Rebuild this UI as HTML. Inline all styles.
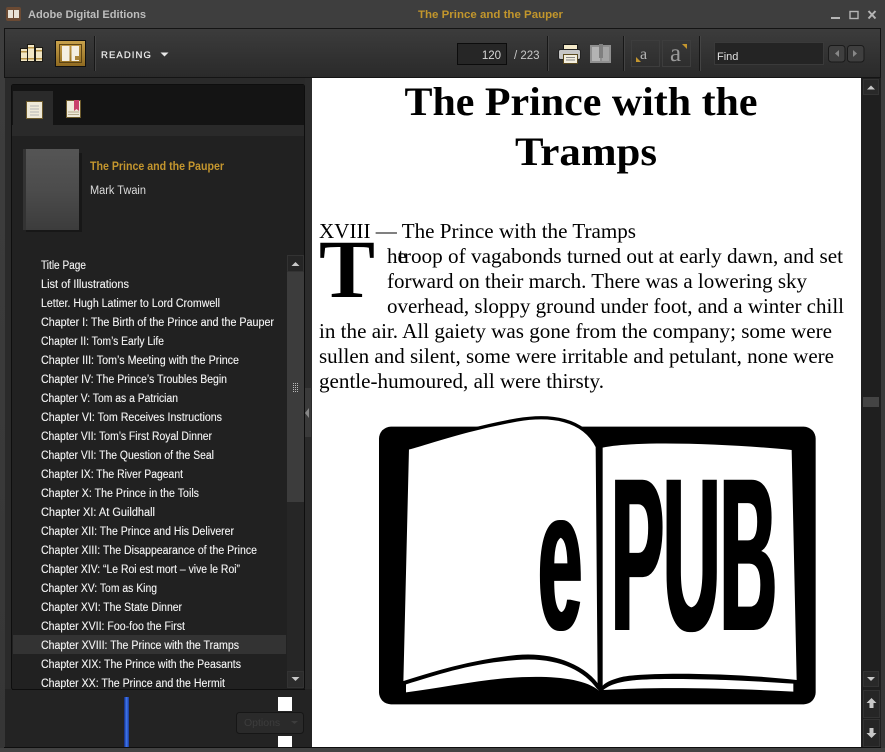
<!DOCTYPE html>
<html><head><meta charset="utf-8"><title>The Prince and the Pauper</title>
<style>
html,body{margin:0;padding:0;background:#3a3a3a;width:885px;height:752px;overflow:hidden}
svg{display:block}
.s{font-family:"Liberation Sans",sans-serif}
.toc text{font-family:"Liberation Sans",sans-serif;font-size:11.5px;fill:#f4f4f4;stroke:#f4f4f4;stroke-width:.12px}
.b text{font-family:"Liberation Serif",serif;font-size:21px;fill:#000}
</style></head><body>
<svg width="885" height="752" viewBox="0 0 885 752" xmlns="http://www.w3.org/2000/svg">
<defs>
<linearGradient id="top" x1="0" y1="0" x2="0" y2="1"><stop offset="0" stop-color="#3e3e3e"/><stop offset="1" stop-color="#363636"/></linearGradient>
<linearGradient id="tb" x1="0" y1="0" x2="0" y2="1"><stop offset="0" stop-color="#3c3c3c"/><stop offset="1" stop-color="#2a2a2a"/></linearGradient>
<linearGradient id="gold" x1="0" y1="0" x2="0" y2="1"><stop offset="0" stop-color="#c9a24c"/><stop offset="1" stop-color="#8f6a20"/></linearGradient>
<linearGradient id="cov" x1="0" y1="0" x2="0" y2="1"><stop offset="0" stop-color="#555"/><stop offset=".5" stop-color="#4c4c4c"/><stop offset="1" stop-color="#3c3c3c"/></linearGradient>
<linearGradient id="blue" x1="0" y1="0" x2="1" y2="0"><stop offset="0" stop-color="#12287a"/><stop offset=".5" stop-color="#3f78f0"/><stop offset="1" stop-color="#1a3a9a"/></linearGradient>
<filter id="fat" x="-20%" y="-20%" width="140%" height="140%" primitiveUnits="userSpaceOnUse"><feMorphology operator="dilate" radius="11 0"/></filter>
</defs>
<rect width="885" height="752" fill="url(#top)"/>

<!-- title bar -->
<rect x="6" y="7" width="15" height="14" rx="2" fill="#6b4a33"/>
<rect x="8" y="10" width="5" height="8" fill="#e9e2d6"/><rect x="14" y="10" width="5" height="8" fill="#e9e2d6"/>
<text class="s" x="28" y="18" font-size="11" font-weight="bold" fill="#bdbdbd" textLength="118" lengthAdjust="spacingAndGlyphs">Adobe Digital Editions</text>
<text class="s" x="418" y="18" font-size="11" font-weight="bold" fill="#c2962c" textLength="145" lengthAdjust="spacingAndGlyphs">The Prince and the Pauper</text>
<rect x="831" y="17" width="9" height="2" fill="#b5b5b5"/>
<rect x="850" y="11.5" width="8" height="7" fill="none" stroke="#b5b5b5" stroke-width="1.4"/>
<path d="M868.5 11L875.5 18.5M875.5 11L868.5 18.5" stroke="#b5b5b5" stroke-width="2"/>

<!-- toolbar -->
<rect x="4.500" y="28.500" width="876" height="49" fill="url(#tb)" stroke="#141414"/>
<!-- library icon -->
<g stroke="#1c1a14" stroke-width="1" fill="#f1e6c4">
<rect x="20.500" y="48.500" width="7" height="13"/><rect x="27.500" y="44.500" width="7" height="17"/><rect x="35.500" y="47.500" width="7" height="14"/></g>
<g fill="#b8954a"><rect x="21" y="51" width="6" height="1.500"/><rect x="21" y="58" width="6" height="1.500"/><rect x="28" y="47" width="6" height="1.500"/><rect x="28" y="58" width="6" height="1.500"/><rect x="36" y="50" width="6" height="1.500"/><rect x="36" y="58" width="6" height="1.500"/></g>
<!-- reading button -->
<rect x="55.500" y="40.500" width="30" height="26" fill="url(#gold)" stroke="#111"/>
<rect x="59.500" y="44.500" width="22" height="18" fill="none" stroke="#5d4414"/>
<rect x="62" y="46" width="7.500" height="15" fill="#f4efe2"/><rect x="71.500" y="46" width="7.500" height="15" fill="#f4efe2"/>
<rect x="75" y="56" width="4" height="4" fill="#a98338"/>
<rect x="94" y="36" width="1" height="35" fill="#171717"/><rect x="95" y="36" width="1" height="35" fill="#444"/>
<text class="s" x="101" y="58" font-size="9.500" fill="#f0f0f0" stroke="#f0f0f0" stroke-width=".2" letter-spacing="1.100">READING</text>
<path d="M160.500 52.500h8l-4 4z" fill="#e8e8e8"/>
<!-- page box -->
<rect x="457.500" y="43.500" width="49" height="21" fill="#262626" stroke="#0c0c0c"/>
<text class="s" x="501" y="59" font-size="11.500" fill="#d8d8d8" text-anchor="end">120</text>
<text class="s" x="514" y="59" font-size="11.500" fill="#c8c8c8">/ 223</text>
<rect x="547" y="36" width="1" height="35" fill="#171717"/><rect x="548" y="36" width="1" height="35" fill="#444"/>
<!-- printer -->
<rect x="563.500" y="44.500" width="14" height="7" fill="#f2e8c8" stroke="#151515"/>
<rect x="558.500" y="49.500" width="22" height="10" rx="2" fill="#c6c6c6" stroke="#222"/>
<rect x="563.500" y="54.500" width="14" height="9" fill="#f4efdf" stroke="#5a4a20"/>
<path d="M566 57.500h9M566 60h9" stroke="#888" stroke-width="1"/>
<!-- grey book -->
<rect x="590" y="45" width="21" height="18" fill="#8f8f8f"/>
<rect x="592" y="47" width="8" height="14" fill="#b3b3b3"/><rect x="602" y="47" width="7" height="14" fill="#a4a4a4"/>
<rect x="599" y="44" width="4" height="14" fill="#7f7f7f"/>
<rect x="623" y="36" width="1" height="35" fill="#171717"/><rect x="624" y="36" width="1" height="35" fill="#444"/>
<!-- font size -->
<rect x="631.500" y="40.500" width="28" height="26" fill="none" stroke="#3d3d3d"/>
<rect x="662.500" y="40.500" width="28" height="26" fill="none" stroke="#3d3d3d"/>
<text x="640" y="59" font-family="Liberation Serif,serif" font-size="16" fill="#b5b5b5">a</text>
<text x="670" y="61" font-family="Liberation Serif,serif" font-size="25" fill="#999">a</text>
<path d="M636 57v5h5z" fill="#c4962e"/>
<path d="M682 44h5v5z" fill="#c4962e"/>
<rect x="699" y="36" width="1" height="35" fill="#171717"/><rect x="700" y="36" width="1" height="35" fill="#444"/>
<!-- find -->
<rect x="714.500" y="42.500" width="109" height="22" fill="#242424" stroke="#3a3a3a"/>
<text class="s" x="717" y="60" font-size="11" fill="#e0e0e0">Find</text>
<rect x="828.500" y="45.500" width="16.500" height="16.500" rx="3" fill="#3f3f3f" stroke="#1a1a1a"/>
<rect x="847.500" y="45.500" width="16.500" height="16.500" rx="3" fill="#3f3f3f" stroke="#1a1a1a"/>
<path d="M839 50v7l-4-3.500z" fill="#888"/><path d="M853 50v7l4-3.500z" fill="#888"/>

<!-- left side -->
<rect x="5" y="78" width="307" height="669" fill="#2a2a2a"/>
<rect x="5" y="690" width="307" height="57" fill="#232323"/>
<rect x="11.500" y="84.500" width="293" height="605" rx="2" fill="#212121" stroke="#0e0e0e"/>
<rect x="12" y="85" width="292" height="40" fill="#141414"/>
<rect x="12" y="125" width="292" height="11" fill="#2a2a2a"/>
<path d="M13 125V91h40v34z" fill="#2a2a2a"/>
<rect x="26.500" y="101.500" width="16" height="17" fill="#efe9d8" stroke="#6c5a2c"/>
<path d="M30 106h9M30 109h9M30 112h9M30 115h9" stroke="#b5b5b5" stroke-width="1"/>
<rect x="66.500" y="100.500" width="14" height="17" fill="#efe9d8" stroke="#6c5a2c"/>
<path d="M68 112h11M68 114.500h11" stroke="#b5a98a" stroke-width="1"/>
<path d="M74 100h5v11l-2.500-2-2.500 2z" fill="#c9406a"/>
<!-- cover -->
<rect x="26" y="153" width="56" height="79" fill="#141414" opacity=".7"/>
<rect x="23" y="149" width="56" height="81" fill="url(#cov)"/>
<rect x="23" y="149" width="3" height="81" fill="#333"/>
<text class="s" x="90" y="170" font-size="11.500" font-weight="bold" fill="#c4962e" textLength="134" lengthAdjust="spacingAndGlyphs">The Prince and the Pauper</text>
<text class="s" x="90" y="194" font-size="11.500" fill="#dcdcdc" textLength="56" lengthAdjust="spacingAndGlyphs">Mark Twain</text>

<rect x="13" y="635" width="273" height="19" fill="#333"/>
<g class="toc">
<text x="41" y="269" textLength="45" lengthAdjust="spacingAndGlyphs">Title Page</text>
<text x="41" y="288" textLength="88" lengthAdjust="spacingAndGlyphs">List of Illustrations</text>
<text x="41" y="307" textLength="179" lengthAdjust="spacingAndGlyphs">Letter. Hugh Latimer to Lord Cromwell</text>
<text x="41" y="326" textLength="233" lengthAdjust="spacingAndGlyphs">Chapter I: The Birth of the Prince and the Pauper</text>
<text x="41" y="345" textLength="123" lengthAdjust="spacingAndGlyphs">Chapter II: Tom’s Early Life</text>
<text x="41" y="364" textLength="198" lengthAdjust="spacingAndGlyphs">Chapter III: Tom’s Meeting with the Prince</text>
<text x="41" y="383" textLength="186" lengthAdjust="spacingAndGlyphs">Chapter IV: The Prince’s Troubles Begin</text>
<text x="41" y="402" textLength="137" lengthAdjust="spacingAndGlyphs">Chapter V: Tom as a Patrician</text>
<text x="41" y="421" textLength="181" lengthAdjust="spacingAndGlyphs">Chapter VI: Tom Receives Instructions</text>
<text x="41" y="440" textLength="171" lengthAdjust="spacingAndGlyphs">Chapter VII: Tom’s First Royal Dinner</text>
<text x="41" y="459" textLength="173" lengthAdjust="spacingAndGlyphs">Chapter VII: The Question of the Seal</text>
<text x="41" y="478" textLength="142" lengthAdjust="spacingAndGlyphs">Chapter IX: The River Pageant</text>
<text x="41" y="497" textLength="158" lengthAdjust="spacingAndGlyphs">Chapter X: The Prince in the Toils</text>
<text x="41" y="516" textLength="114" lengthAdjust="spacingAndGlyphs">Chapter XI: At Guildhall</text>
<text x="41" y="535" textLength="193" lengthAdjust="spacingAndGlyphs">Chapter XII: The Prince and His Deliverer</text>
<text x="41" y="554" textLength="216" lengthAdjust="spacingAndGlyphs">Chapter XIII: The Disappearance of the Prince</text>
<text x="41" y="573" textLength="199" lengthAdjust="spacingAndGlyphs">Chapter XIV: “Le Roi est mort – vive le Roi”</text>
<text x="41" y="592" textLength="116" lengthAdjust="spacingAndGlyphs">Chapter XV: Tom as King</text>
<text x="41" y="611" textLength="141" lengthAdjust="spacingAndGlyphs">Chapter XVI: The State Dinner</text>
<text x="41" y="630" textLength="144" lengthAdjust="spacingAndGlyphs">Chapter XVII: Foo-foo the First</text>
<text x="41" y="649" textLength="198" lengthAdjust="spacingAndGlyphs">Chapter XVIII: The Prince with the Tramps</text>
<text x="41" y="668" textLength="200" lengthAdjust="spacingAndGlyphs">Chapter XIX: The Prince with the Peasants</text>
<text x="41" y="687" textLength="184" lengthAdjust="spacingAndGlyphs">Chapter XX: The Prince and the Hermit</text>
</g>
<rect x="5" y="689" width="307" height="58" fill="#232323"/>
<rect x="12" y="689" width="293" height="1" fill="#0e0e0e"/>
<!-- toc scrollbar -->
<rect x="287" y="255" width="17" height="433" fill="#262626"/>
<rect x="287" y="272" width="17" height="230" fill="#3c3c3c"/>
<rect x="287.500" y="255.500" width="16" height="16" fill="#252525" stroke="#333"/>
<rect x="287.500" y="671.500" width="16" height="16" fill="#2c2c2c" stroke="#333"/>
<path d="M291.500 266h8l-4-4z" fill="#c8c8c8"/>
<path d="M291.500 677h8l-4 4z" fill="#c8c8c8"/>
<path d="M293.500 383v10M295.500 383v10M297.500 383v10" stroke="#bbb" stroke-width="1" stroke-dasharray="1 1"/>
<rect x="305" y="78" width="7" height="310" fill="#2c2c2c"/>
<rect x="305" y="388" width="6" height="49" fill="#3a3a3a"/>
<path d="M309 408v10l-4-5z" fill="#888"/>
<!-- bottom artefacts -->
<rect x="124" y="697" width="5" height="50" fill="url(#blue)"/>
<rect x="278" y="697" width="14" height="14" fill="#fff"/>
<rect x="278" y="736" width="14" height="11" fill="#fff"/>
<rect x="236.500" y="712.500" width="67" height="21" rx="3" fill="#2a2a2a" stroke="#161616"/>
<text class="s" x="244" y="726" font-size="10.500" fill="#3d3d3d">Options</text>
<path d="M291 721h7l-3.500 3z" fill="#3d3d3d"/>

<!-- page -->
<rect x="312" y="78" width="549" height="669" fill="#fff"/>
<text x="581" y="115" text-anchor="middle" font-family="Liberation Serif,serif" font-weight="bold" font-size="40" textLength="353" lengthAdjust="spacingAndGlyphs">The Prince with the</text>
<text x="586" y="165" text-anchor="middle" font-family="Liberation Serif,serif" font-weight="bold" font-size="40" textLength="142" lengthAdjust="spacingAndGlyphs">Tramps</text>
<g class="b">
<text x="319" y="238" textLength="317" lengthAdjust="spacingAndGlyphs">XVIII — The Prince with the Tramps</text>
<text x="387" y="263">he</text>
<text x="398" y="263" textLength="445" lengthAdjust="spacingAndGlyphs">troop of vagabonds turned out at early dawn, and set</text>
<text x="387" y="288" textLength="420" lengthAdjust="spacingAndGlyphs">forward on their march. There was a lowering sky</text>
<text x="387" y="313" textLength="457" lengthAdjust="spacingAndGlyphs">overhead, sloppy ground under foot, and a winter chill</text>
<text x="319" y="338" textLength="513" lengthAdjust="spacingAndGlyphs">in the air. All gaiety was gone from the company; some were</text>
<text x="319" y="363" textLength="515" lengthAdjust="spacingAndGlyphs">sullen and silent, some were irritable and petulant, none were</text>
<text x="319" y="388" textLength="285" lengthAdjust="spacingAndGlyphs">gentle-humoured, all were thirsty.</text>
</g>
<text x="319" y="297" font-family="Liberation Serif,serif" font-weight="bold" font-size="83" textLength="56" lengthAdjust="spacingAndGlyphs">T</text>

<!-- epub logo -->
<g transform="translate(370 405) scale(.33333)">
<rect x="27" y="65" width="1310" height="833" rx="36" fill="#000"/>
<path d="M112 130C200 105 300 70 440 45C540 28 640 40 682 125L688 850C650 790 560 745 440 755C300 770 190 805 95 835Z" fill="#fff" stroke="#000" stroke-width="10"/>
<path d="M108 838C200 810 300 775 440 765C560 755 640 795 680 850L688 858C640 815 520 810 400 820C300 830 200 850 108 862Z" fill="#fff"/>
<path d="M698 128C800 105 1100 118 1265 135L1280 825C1100 805 850 800 760 815C730 822 710 830 698 842Z" fill="#fff"/>
<path d="M700 855C730 830 780 822 900 822C1050 822 1180 830 1270 836V860C1100 850 850 845 700 855Z" fill="#fff"/>
<g font-family="Liberation Sans,sans-serif" font-weight="bold" fill="#000">
<text transform="translate(724 675) scale(.36 1)" font-size="655" filter="url(#fat)">P</text>
<text transform="translate(880 675) scale(.36 1)" font-size="655" filter="url(#fat)">U</text>
<text transform="translate(1050 675) scale(.36 1)" font-size="655" filter="url(#fat)">B</text>
<text transform="translate(505 672) scale(.38 .98)" font-size="620" filter="url(#fat)">e</text>
</g>
</g>

<!-- right scrollbar -->
<rect x="861" y="78" width="20" height="669" fill="#1f1f1f"/>
<rect x="863.500" y="79.500" width="15" height="15" fill="#292929" stroke="#333"/>
<path d="M867 89.500h8l-4-4z" fill="#c8c8c8"/>
<rect x="863" y="397" width="16" height="10" fill="#444"/>
<rect x="863.500" y="671.500" width="15" height="15" fill="#292929" stroke="#333"/>
<path d="M867 677h8l-4 4z" fill="#c8c8c8"/>
<rect x="863.500" y="690.500" width="16" height="27" fill="#262626" stroke="#333"/>
<rect x="863.500" y="719.500" width="16" height="27" fill="#262626" stroke="#333"/>
<path d="M871.500 698l5 5h-3v5h-4v-5h-3z" fill="#c8c8c8"/>
<path d="M871.500 738l5-5h-3v-5h-4v5h-3z" fill="#c8c8c8"/>
<rect x="4" y="747" width="877" height="1" fill="#0e0e0e"/>
<rect x="0" y="748" width="885" height="4" fill="#424242"/>
</svg>
</body></html>
